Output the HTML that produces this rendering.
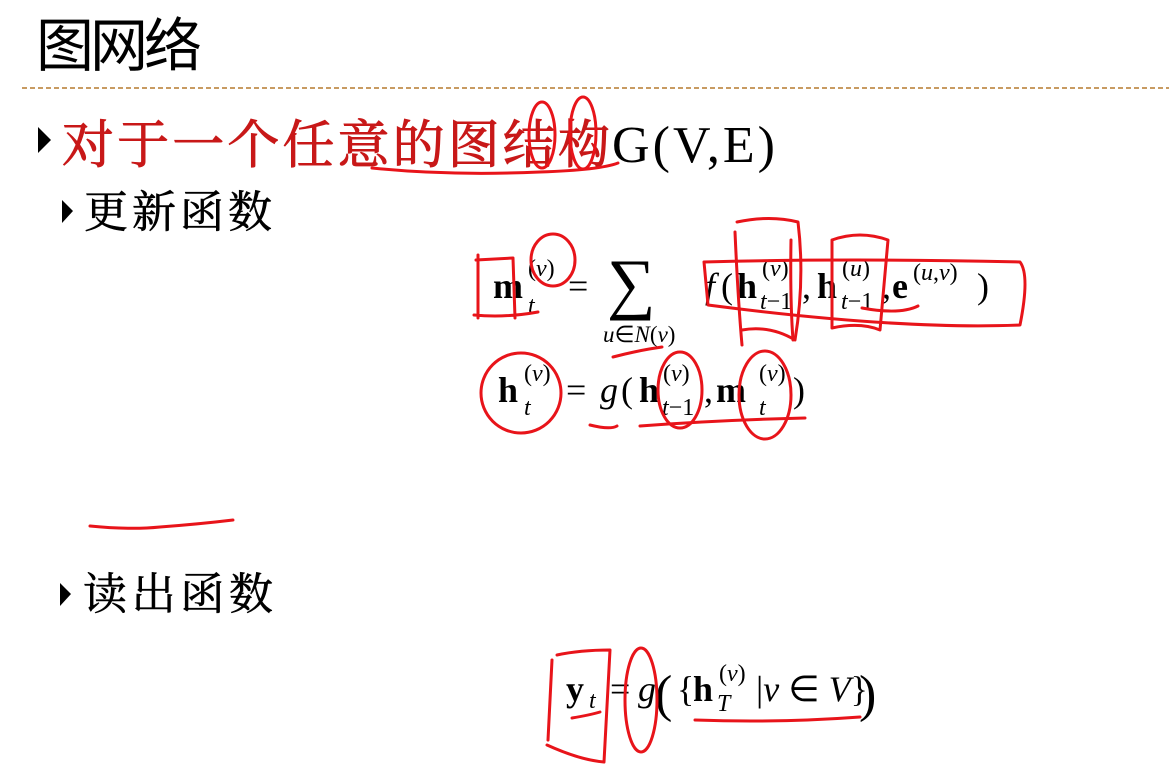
<!DOCTYPE html>
<html><head><meta charset="utf-8"><style>
html,body{margin:0;padding:0;background:#fff;width:1169px;height:780px;overflow:hidden}
svg{position:absolute;left:0;top:0}
.cj{font-family:"Liberation Serif","Noto Serif CJK SC",serif}
.m{font-family:"Liberation Serif",serif}
.b{font-weight:bold}
.i{font-style:italic}
</style></head><body>
<svg width="1169" height="780" viewBox="0 0 1169 780">
<text x="36" y="66" font-family="'Liberation Sans','Noto Sans CJK SC',sans-serif" font-size="58" textLength="166" fill="#000">图网络</text>
<line x1="22" y1="88" x2="1169" y2="88" stroke="#c89b62" stroke-width="2" stroke-dasharray="5,3"/>
<polygon points="38,127 51,140 38,153" fill="#000"/>
<text class="cj" x="62" y="163" font-size="52" fill="#c81818" stroke="#c81818" stroke-width="0.9" textLength="548">对于一个任意的图结构</text>
<text class="m" x="612" y="162" font-size="52" fill="#000" textLength="163">G(V,E)</text>
<polygon points="62,200 73,211 62,223" fill="#000"/>
<text class="cj" x="84" y="227" font-size="44" fill="#000" stroke="#000" stroke-width="0.6" textLength="188">更新函数</text>
<polygon points="60,583 71,594 60,606" fill="#000"/>
<text class="cj" x="83" y="609" font-size="44" fill="#000" stroke="#000" stroke-width="0.6" textLength="190">读出函数</text>

<g fill="#000">
<text class="m b" x="493" y="298" font-size="36">m</text>
<text class="m" x="528" y="276" font-size="24">(<tspan class="i">v</tspan>)</text>
<text class="m i" x="528" y="313" font-size="24">t</text>
<text class="m" x="568" y="298" font-size="36">=</text>
<text class="m" x="607" y="306" font-size="68">∑</text>
<text class="m i" x="603" y="342" font-size="23">u<tspan font-style="normal">∈</tspan>N<tspan font-style="normal">(</tspan>v<tspan font-style="normal">)</tspan></text>
<text class="m i" x="705" y="298" font-size="36">f</text>
<text class="m" x="721" y="298" font-size="36">(</text>
<text class="m b" x="737" y="298" font-size="36">h</text>
<text class="m" x="762" y="276" font-size="24">(<tspan class="i">v</tspan>)</text>
<text class="m i" x="760" y="309" font-size="24">t<tspan font-style="normal">−1</tspan></text>
<text class="m" x="802" y="298" font-size="36">,</text>
<text class="m b" x="817" y="298" font-size="36">h</text>
<text class="m" x="842" y="276" font-size="24">(<tspan class="i">u</tspan>)</text>
<text class="m i" x="841" y="309" font-size="24">t<tspan font-style="normal">−1</tspan></text>
<text class="m" x="882" y="298" font-size="36">,</text>
<text class="m b" x="892" y="298" font-size="36">e</text>
<text class="m" x="913" y="280" font-size="24">(<tspan class="i">u</tspan>,<tspan class="i">v</tspan>)</text>
<text class="m" x="977" y="298" font-size="36">)</text>

<text class="m b" x="498" y="402" font-size="36">h</text>
<text class="m" x="524" y="381" font-size="24">(<tspan class="i">v</tspan>)</text>
<text class="m i" x="524" y="415" font-size="24">t</text>
<text class="m" x="566" y="402" font-size="36">=</text>
<text class="m i" x="600" y="402" font-size="36">g</text>
<text class="m" x="621" y="402" font-size="36">(</text>
<text class="m b" x="639" y="402" font-size="36">h</text>
<text class="m" x="663" y="381" font-size="24">(<tspan class="i">v</tspan>)</text>
<text class="m i" x="662" y="415" font-size="24">t<tspan font-style="normal">−1</tspan></text>
<text class="m" x="704" y="402" font-size="36">,</text>
<text class="m b" x="716" y="402" font-size="36">m</text>
<text class="m" x="759" y="381" font-size="24">(<tspan class="i">v</tspan>)</text>
<text class="m i" x="759" y="415" font-size="24">t</text>
<text class="m" x="793" y="402" font-size="36">)</text>

<text class="m b" x="566" y="701" font-size="36">y</text>
<text class="m i" x="589" y="708" font-size="24">t</text>
<text class="m" x="610" y="701" font-size="36">=</text>
<text class="m i" x="638" y="701" font-size="36">g</text>
<text class="m" x="655" y="711" font-size="52">(</text>
<text class="m" x="677" y="701" font-size="36">{</text>
<text class="m b" x="693" y="701" font-size="36">h</text>
<text class="m" x="719" y="681" font-size="24">(<tspan class="i">v</tspan>)</text>
<text class="m i" x="717" y="711" font-size="24">T</text>
<text class="m" x="756" y="701" font-size="36">|<tspan class="i">v</tspan> ∈ <tspan class="i">V</tspan>}</text>
<text class="m" x="859" y="711" font-size="52">)</text>
</g>

<g fill="none" stroke="#e8141a" stroke-width="3" stroke-linecap="round" stroke-linejoin="round">
<path d="M372 168 Q450 176 540 172 Q600 170 618 163"/>
<ellipse cx="542" cy="135" rx="13" ry="33"/>
<ellipse cx="583" cy="133" rx="13" ry="36"/>
<path d="M478 255 L478 318 M476 260 L513 258 L515 318 M474 315 Q505 318 538 312"/>
<ellipse cx="553" cy="260" rx="22" ry="26"/>
<path d="M613 357 Q640 350 662 347"/>
<path d="M704 262 Q850 258 1020 262 Q1030 275 1020 325 Q900 330 708 305 Z"/>
<path d="M735 232 Q738 300 742 345 M737 222 Q770 215 798 222 Q805 280 795 340 Q770 325 742 330"/>
<path d="M791 240 Q790 300 793 340 M832 240 L832 328 Q860 322 880 330 L888 240 Q860 230 832 240"/>
<path d="M862 308 Q900 315 918 306"/>
<ellipse cx="521" cy="393" rx="40" ry="40"/>
<path d="M590 425 Q610 430 617 426"/>
<ellipse cx="680" cy="390" rx="22" ry="38"/>
<path d="M640 426 Q720 420 805 418"/>
<ellipse cx="765" cy="395" rx="26" ry="44"/>
<path d="M557 655 Q580 650 610 650 L604 762 Q580 760 547 745 M548 740 L552 660 M572 718 Q590 715 600 712"/>
<ellipse cx="641" cy="700" rx="16" ry="52"/>
<path d="M695 720 Q780 723 860 717"/>
<path d="M90 526 Q130 530 160 527 Q200 524 233 520"/>
</g>
</svg>
</body></html>
